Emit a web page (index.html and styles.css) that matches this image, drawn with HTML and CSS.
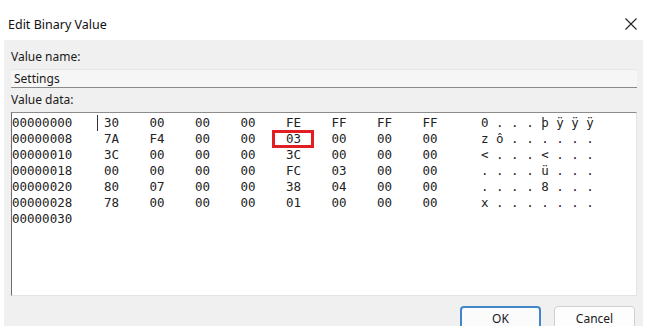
FILE: index.html
```html
<!DOCTYPE html>
<html>
<head>
<title>Edit Binary Value</title>
<link rel="stylesheet" href="styles.css">
</head>
<body>

<div class="dialog">
  <div class="titlebar">
    <span class="title">Edit Binary Value</span>
    <svg class="close" width="12" height="12" viewBox="0 0 12 12">
      <path d="M0.5 0.5 L11.5 11.5 M11.5 0.5 L0.5 11.5" stroke="#222" stroke-width="1.1" fill="none"/>
    </svg>
  </div>

  <div class="panel">
    <div class="label first">Value name:</div>
    <div class="field">Settings</div>
    <div class="label">Value data:</div>

    <div class="data">
      <span class="caret"></span>
      <div class="row"><span class="off">00000000</span><span class="hex">30</span><span class="hex">00</span><span class="hex">00</span><span class="hex">00</span><span class="hex">FE</span><span class="hex">FF</span><span class="hex">FF</span><span class="hex">FF</span><span class="asc">0 . . . þ ÿ ÿ ÿ</span></div>
      <div class="row"><span class="off">00000008</span><span class="hex">7A</span><span class="hex">F4</span><span class="hex">00</span><span class="hex">00</span><span class="hex marked">03</span><span class="hex">00</span><span class="hex">00</span><span class="hex">00</span><span class="asc">z ô . . . . . .</span></div>
      <div class="row"><span class="off">00000010</span><span class="hex">3C</span><span class="hex">00</span><span class="hex">00</span><span class="hex">00</span><span class="hex">3C</span><span class="hex">00</span><span class="hex">00</span><span class="hex">00</span><span class="asc">&lt; . . . &lt; . . .</span></div>
      <div class="row"><span class="off">00000018</span><span class="hex">00</span><span class="hex">00</span><span class="hex">00</span><span class="hex">00</span><span class="hex">FC</span><span class="hex">03</span><span class="hex">00</span><span class="hex">00</span><span class="asc">. . . . ü . . .</span></div>
      <div class="row"><span class="off">00000020</span><span class="hex">80</span><span class="hex">07</span><span class="hex">00</span><span class="hex">00</span><span class="hex">38</span><span class="hex">04</span><span class="hex">00</span><span class="hex">00</span><span class="asc">. . . . 8 . . .</span></div>
      <div class="row"><span class="off">00000028</span><span class="hex">78</span><span class="hex">00</span><span class="hex">00</span><span class="hex">00</span><span class="hex">01</span><span class="hex">00</span><span class="hex">00</span><span class="hex">00</span><span class="asc">x . . . . . . .</span></div>
      <div class="row"><span class="off">00000030</span></div>
    </div>

    <div class="buttons">
      <button class="btn default">OK</button>
      <button class="btn">Cancel</button>
    </div>
  </div>
</div>

</body>
</html>
```

FILE: styles.css
```css
html, body {
  margin: 0;
  padding: 0;
  background: #ffffff;
  overflow: hidden;
}
body {
  width: 651px;
  height: 326px;
  font-family: "Noto Sans", "Liberation Sans", sans-serif;
  font-size: 12px;
  color: #1a1a1a;
}
.titlebar {
  display: flex;
  align-items: center;
  justify-content: space-between;
  height: 32px;
  padding: 8px 14px 0 8px;
}
.title {
  font-size: 12.5px;
  color: #111;
}
.panel {
  margin: 0 8px 0 4px;
  background: #f0f0f0;
  padding: 0 6px 40px 7px;
  height: 286px;
  box-sizing: border-box;
}
.label {
  height: 14px;
  line-height: 14px;
  margin-top: 5px;
  margin-bottom: 5px;
}
.label.first {
  padding-top: 10px;
  margin-top: 0;
}
.field {
  line-height: 18px;
  padding-left: 3px;
  background: #f6f6f6;
  border-top: 1px solid #e6e6e6;
  border-bottom: 1px solid #8a8a8a;
  height: 17px;
}
.data {
  position: relative;
  height: 180px;
  margin-top: 4px;
  background: #ffffff;
  border-top: 1px solid #8c8c8c;
  border-left: 1px solid #6e6e6e;
  border-right: 1px solid #e3e3e3;
  border-bottom: 1px solid #e3e3e3;
  padding-top: 2px;
  font-family: "DejaVu Sans Mono", "Liberation Mono", monospace;
  font-size: 12.5px;
  color: #222;
}
.caret {
  position: absolute;
  left: 85px;
  top: 2px;
  width: 1px;
  height: 16px;
  background: #333;
}
.row {
  display: flex;
  height: 16px;
  line-height: 16px;
  white-space: pre;
}
.off {
  width: 92px;
}
.hex {
  position: relative;
  width: 45.5px;
}
.asc {
  margin-left: 13px;
}
.marked::before {
  content: "";
  position: absolute;
  left: -14px;
  top: -1px;
  width: 36px;
  height: 12px;
  border: 3px solid #e01e24;
}
.buttons {
  display: flex;
  justify-content: flex-end;
  gap: 13px;
  margin-top: 10px;
  padding-right: 2px;
}
.btn {
  width: 81px;
  height: 25px;
  font-family: "Noto Sans", "Liberation Sans", sans-serif;
  font-size: 12px;
  color: #1a1a1a;
  background: #fdfdfd;
  border: 1px solid #d0d0d0;
  border-radius: 4px;
  padding: 0;
}
.btn.default {
  border: 2px solid #3f87c9;
  background: #fbfbfb;
}
```
